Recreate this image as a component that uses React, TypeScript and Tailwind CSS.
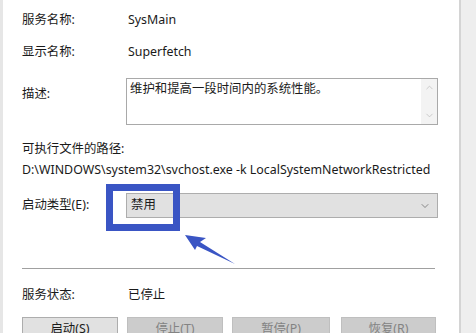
import { ChevronDown, ChevronUp } from 'lucide-react';

const font = { fontFamily: '"Noto Sans", "Noto Sans CJK SC", sans-serif' };

const Row = ({ label, value }: { label: string; value: string }) => (
  <div className="flex items-center h-[32px] shrink-0">
    <div className="w-[106px] shrink-0">{label}</div>
    <div>{value}</div>
  </div>
);

const App = () => {
  return (
    <div
      className="w-[476px] h-[333px] overflow-hidden bg-[#f0f0f0] flex text-[12.4px] text-[#1a1a1a] relative"
      style={font}
    >
      <div className="w-[3px] bg-[#e6e6e6]" />
      {/* dialog body */}
      <div className="w-[456px] bg-white pl-[19px] pr-[21px] pt-[4px] flex flex-col">
        <Row label="服务名称:" value="SysMain" />
        <Row label="显示名称:" value="Superfetch" />

        <div className="flex mt-[10px] shrink-0">
          <div className="w-[104px] shrink-0 pt-[7px] leading-[17px]">描述:</div>
          <div className="flex-1 h-[47px] border border-[#a9a9a9] flex">
            <div className="flex-1 pl-[3px] pt-[1px] leading-[18px]">维护和提高一段时间内的系统性能。</div>
            <div className="w-[16px] bg-[#f3f3f3] flex flex-col justify-between items-center py-[3px] text-[#b9b9b9]">
              <ChevronUp size={11} strokeWidth={1.5} />
              <ChevronDown size={11} strokeWidth={1.5} />
            </div>
          </div>
        </div>

        <div className="mt-[14px] leading-[20px] shrink-0">可执行文件的路径:</div>
        <div className="mt-[1px] leading-[20px] whitespace-nowrap shrink-0">D:\WINDOWS\system32\svchost.exe -k LocalSystemNetworkRestricted</div>

        <div className="flex items-center mt-[13px] shrink-0">
          <div className="w-[104px] shrink-0">启动类型(E):</div>
          <div className="flex-1 h-[25px] border border-[#adadad] bg-[#e1e1e1] flex items-center justify-between pl-[4px] pr-[6px]">
            <span>禁用</span>
            <ChevronDown size={12} strokeWidth={1.3} className="text-[#555]" />
          </div>
        </div>

        <div className="h-px bg-[#a0a0a0] mt-[50px] mr-[3px] shrink-0" />

        <div className="mt-[10px] shrink-0">
          <Row label="服务状态:" value="已停止" />
        </div>

        <div className="flex gap-[9px] mt-[6px] shrink-0">
          <div className="w-[96px] h-[24px] border border-[#adadad] bg-[#e1e1e1] flex items-center justify-center">启动(S)</div>
          <div className="w-[96px] h-[24px] border border-[#bfbfbf] bg-[#cccccc] flex items-center justify-center text-[#838383]">停止(T)</div>
          <div className="w-[98px] h-[24px] border border-[#bfbfbf] bg-[#cccccc] flex items-center justify-center text-[#838383]">暂停(P)</div>
          <div className="w-[95px] h-[24px] border border-[#bfbfbf] bg-[#cccccc] flex items-center justify-center text-[#838383] ml-[2px]">恢复(R)</div>
        </div>
      </div>
      {/* right background strip */}
      <div className="flex-1 border-l-2 border-[#d4d4d4] bg-[#eeeeee]" />

      {/* annotation overlay */}
      <div className="absolute left-[106px] top-[184px] w-[74px] h-[47px] border-[7px] border-[#3a55c4]" />
      <svg className="absolute left-0 top-0" width="476" height="333">
        <polygon points="185,235 206,238 200,242 235,264 197,246 195,250" fill="#3a55c4" />
      </svg>
    </div>
  );
};

export default App;
